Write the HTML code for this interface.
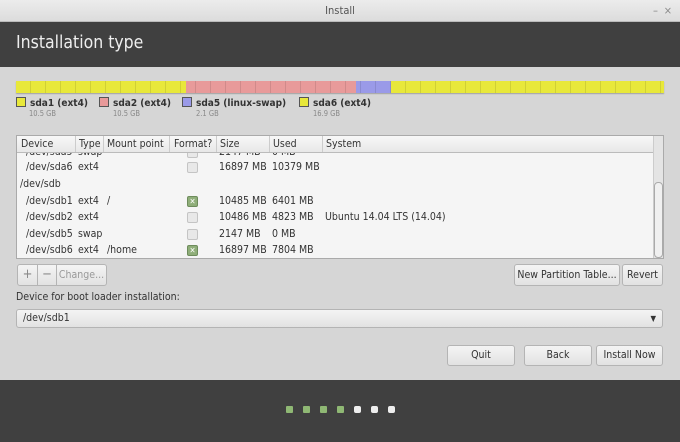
<!DOCTYPE html><html><head><style>
body{margin:0;width:680px;height:442px;overflow:hidden;font-family:"DejaVu Sans Condensed","DejaVu Sans","Liberation Sans",sans-serif;font-stretch:condensed;font-size:10.5px;color:#333;background:#d6d6d6;position:relative;white-space:nowrap}
.a{position:absolute}
.btn{position:absolute;background:linear-gradient(#f4f4f4,#e2e2e2);border:1px solid #b4b4b4;border-radius:3px;box-sizing:border-box;text-align:center;font-size:10.5px;color:#333}
.r{position:absolute;left:0;width:636px;height:16px;line-height:16px}
.r span{position:absolute}
.cb{position:absolute;left:170px;width:9px;height:9px;border:1px solid #c4c4c4;border-radius:2px;background:#e8e8e8;top:3px}
.cb.on{background:#8fae79;border-color:#6e8c5c;color:#fff;font-size:8px;line-height:9px;text-align:center}
.sq{display:inline-block;width:8px;height:8px;border:1px solid #555;vertical-align:-1px;margin-right:4px}
</style></head><body>
<div class="a" style="left:0;top:0;width:680px;height:21px;background:linear-gradient(#ececec,#dcdcdc);border-bottom:1px solid #bbb;text-align:center;line-height:21px;font-size:11px;color:#555">Install<span class="a" style="right:22px;top:0;color:#888">–</span><span class="a" style="right:8px;top:0;color:#888">×</span></div>
<div class="a" style="left:0;top:22px;width:680px;height:45px;background:#404040;color:#eee;font-size:17.5px;line-height:43px;padding-left:16px;box-sizing:border-box">Installation type</div>
<div class="a" style="left:16px;top:81px;width:648px;height:12px;display:flex;box-shadow:0 1px 1px rgba(0,0,0,.25)">
<div style="width:170px;background:#e8e83a"></div><div style="width:170px;background:#e89a9a"></div><div style="width:35px;background:#9a9ae8"></div><div style="flex:1;background:#e8e83a"></div></div>
<div class="a" style="left:16px;top:81px;width:648px;height:12px;background-image:repeating-linear-gradient(90deg,transparent 0 14px,rgba(0,0,0,.1) 14px 15px)"></div>
<div class="a" style="left:16px;top:97px;font-weight:bold;font-size:10px"><span class="sq" style="background:#e8e83a"></span>sda1 (ext4)</div>
<div class="a" style="left:99px;top:97px;font-weight:bold;font-size:10px"><span class="sq" style="background:#e89a9a"></span>sda2 (ext4)</div>
<div class="a" style="left:182px;top:97px;font-weight:bold;font-size:10px"><span class="sq" style="background:#9a9ae8"></span>sda5 (linux-swap)</div>
<div class="a" style="left:299px;top:97px;font-weight:bold;font-size:10px"><span class="sq" style="background:#e8e83a"></span>sda6 (ext4)</div>
<div class="a" style="left:29px;top:109px;font-size:7.5px;color:#888">10.5 GB</div>
<div class="a" style="left:113px;top:109px;font-size:7.5px;color:#888">10.5 GB</div>
<div class="a" style="left:196px;top:109px;font-size:7.5px;color:#888">2.1 GB</div>
<div class="a" style="left:313px;top:109px;font-size:7.5px;color:#888">16.9 GB</div>
<div class="a" style="left:16px;top:135px;width:648px;height:124px;background:#f5f5f5;border:1px solid #aaa;box-sizing:border-box;overflow:hidden">
<div class="a" style="left:0;top:0;width:636px;height:16px;background:linear-gradient(#f8f8f8,#e8e8e8);border-bottom:1px solid #bbb;line-height:16px">
<span class="a" style="left:4px">Device</span><span class="a" style="left:58px;border-left:1px solid #ccc;padding-left:3px;height:16px">Type</span><span class="a" style="left:86px;border-left:1px solid #ccc;padding-left:3px;height:16px">Mount point</span><span class="a" style="left:152px;border-left:1px solid #ccc;padding-left:4px;height:16px">Format?</span><span class="a" style="left:199px;border-left:1px solid #ccc;padding-left:3px;height:16px">Size</span><span class="a" style="left:252px;border-left:1px solid #ccc;padding-left:3px;height:16px">Used</span><span class="a" style="left:305px;border-left:1px solid #ccc;padding-left:3px;height:16px">System</span></div>
<div class="r" style="top:8px;clip-path:inset(9px 0 0 0)"><span style="left:9px">/dev/sda5</span><span style="left:61px">swap</span><div class="cb"></div><span style="left:202px">2147 MB</span><span style="left:255px">0 MB</span></div>
<div class="r" style="top:23px"><span style="left:9px">/dev/sda6</span><span style="left:61px">ext4</span><div class="cb"></div><span style="left:202px">16897 MB</span><span style="left:255px">10379 MB</span></div>
<div class="r" style="top:40px"><span style="left:3px">/dev/sdb</span></div>
<div class="r" style="top:57px"><span style="left:9px">/dev/sdb1</span><span style="left:61px">ext4</span><span style="left:90px">/</span><div class="cb on">✕</div><span style="left:202px">10485 MB</span><span style="left:255px">6401 MB</span></div>
<div class="r" style="top:73px"><span style="left:9px">/dev/sdb2</span><span style="left:61px">ext4</span><div class="cb"></div><span style="left:202px">10486 MB</span><span style="left:255px">4823 MB</span><span style="left:308px">Ubuntu 14.04 LTS (14.04)</span></div>
<div class="r" style="top:90px"><span style="left:9px">/dev/sdb5</span><span style="left:61px">swap</span><div class="cb"></div><span style="left:202px">2147 MB</span><span style="left:255px">0 MB</span></div>
<div class="r" style="top:106px"><span style="left:9px">/dev/sdb6</span><span style="left:61px">ext4</span><span style="left:90px">/home</span><div class="cb on">✕</div><span style="left:202px">16897 MB</span><span style="left:255px">7804 MB</span></div>
<div class="a" style="left:636px;top:0;width:11px;height:122px;background:#e4e4e4;border-left:1px solid #ccc"></div>
<div class="a" style="left:637px;top:46px;width:7px;height:74px;background:#f0f0f0;border:1px solid #aaa;border-radius:4px"></div>
</div>
<div class="btn" style="left:17px;top:264px;width:21px;height:22px;line-height:20px;color:#888;font-size:13px;border-radius:3px 0 0 3px">+</div>
<div class="btn" style="left:37px;top:264px;width:20px;height:22px;line-height:20px;color:#888;font-size:13px;border-radius:0">−</div>
<div class="btn" style="left:56px;top:264px;width:51px;height:22px;line-height:20px;color:#999;border-radius:0 3px 3px 0">Change...</div>
<div class="btn" style="left:514px;top:264px;width:106px;height:22px;line-height:20px">New Partition Table...</div>
<div class="btn" style="left:622px;top:264px;width:41px;height:22px;line-height:20px">Revert</div>
<div class="a" style="left:16px;top:291px">Device for boot loader installation:</div>
<div class="btn" style="left:16px;top:309px;width:647px;height:19px;line-height:17px;text-align:left;padding-left:6px">/dev/sdb1<span class="a" style="right:6px;top:0;font-size:8px">▼</span></div>
<div class="btn" style="left:447px;top:345px;width:68px;height:21px;line-height:19px">Quit</div>
<div class="btn" style="left:524px;top:345px;width:68px;height:21px;line-height:19px">Back</div>
<div class="btn" style="left:596px;top:345px;width:67px;height:21px;line-height:19px">Install Now</div>
<div class="a" style="left:0;top:380px;width:680px;height:62px;background:#404040"></div>
<div class="a" style="left:286px;top:406px;display:flex;gap:10px">
<i style="width:7px;height:7px;background:#8fb874;border-radius:1px"></i><i style="width:7px;height:7px;background:#8fb874;border-radius:1px"></i><i style="width:7px;height:7px;background:#8fb874;border-radius:1px"></i><i style="width:7px;height:7px;background:#8fb874;border-radius:1px"></i><i style="width:7px;height:7px;background:#eee;border-radius:2px"></i><i style="width:7px;height:7px;background:#eee;border-radius:2px"></i><i style="width:7px;height:7px;background:#eee;border-radius:2px"></i></div>
</body></html>
